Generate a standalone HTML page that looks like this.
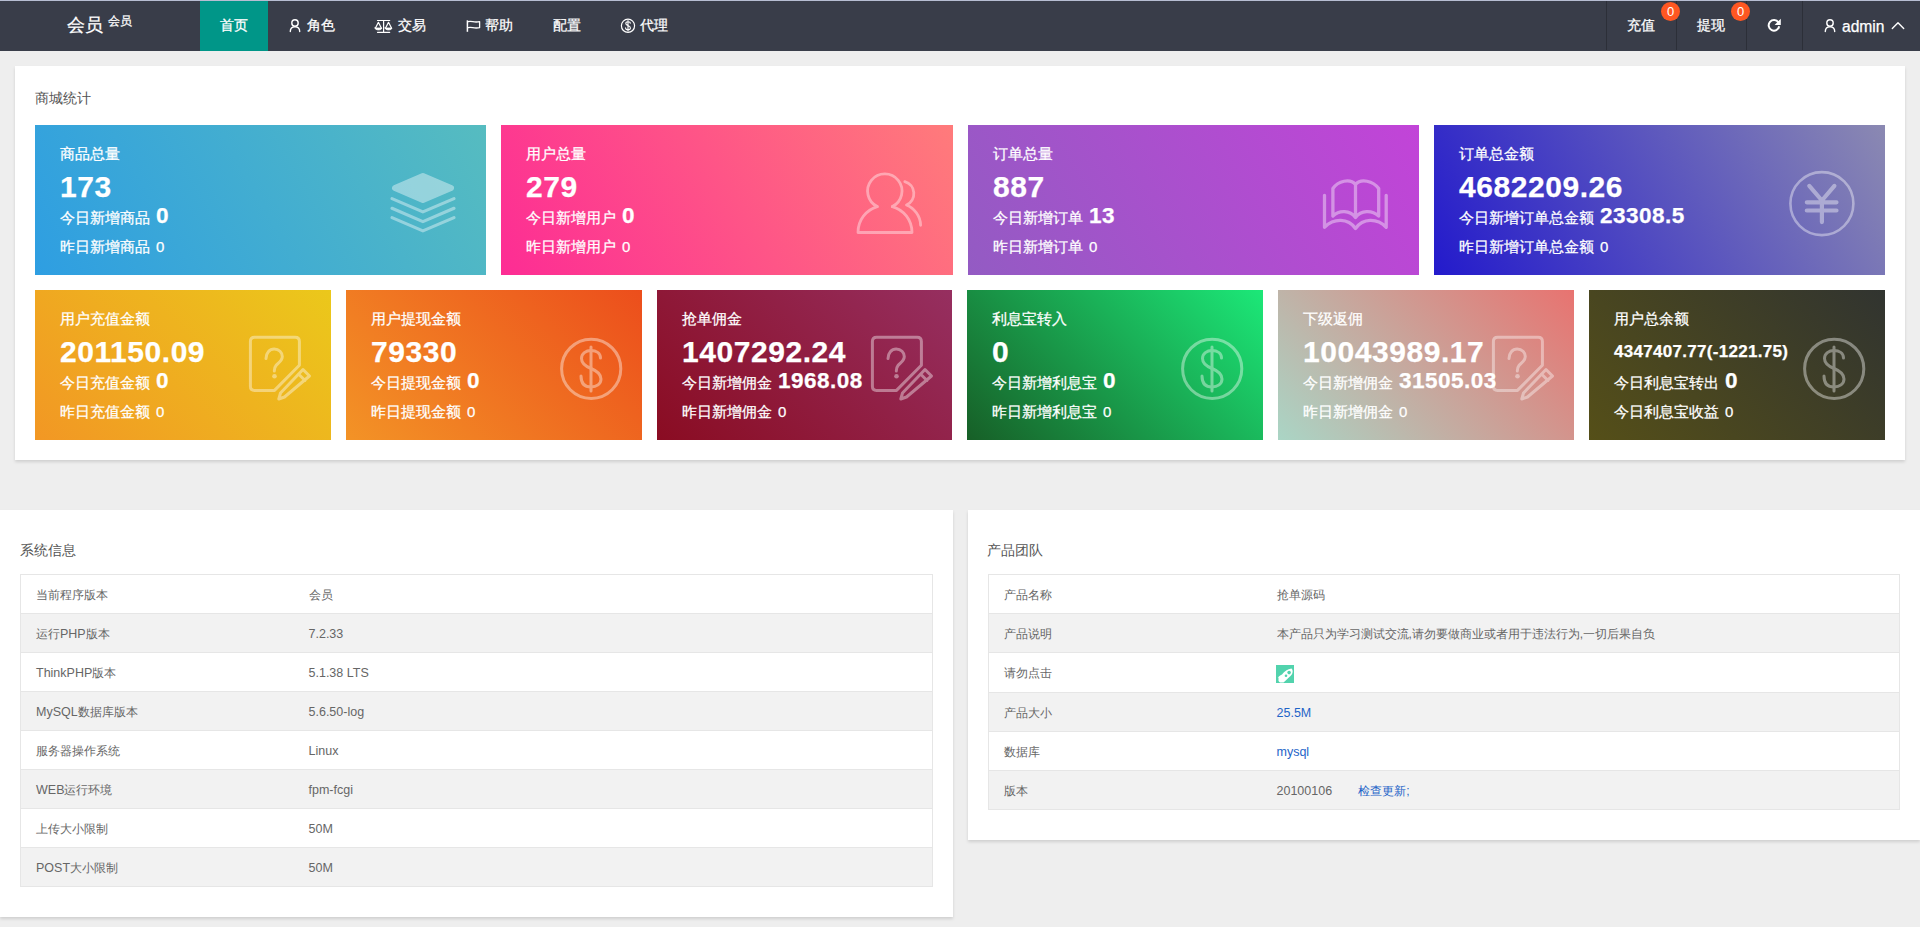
<!DOCTYPE html>
<html><head><meta charset="utf-8">
<style>
*{margin:0;padding:0;box-sizing:border-box}
html,body{width:1920px;height:927px;overflow:hidden;background:#eeeeee;font-family:"Liberation Sans",sans-serif;}
.abs{position:absolute}
.hdr{position:absolute;left:0;top:0;width:1920px;height:51px;background:#393d49;border-top:1px solid #b7bdd2;}
.nav{position:absolute;top:0;height:50px;line-height:50px;color:#fff;font-size:14px;white-space:nowrap;-webkit-text-stroke:.25px #fff}
.sep{position:absolute;top:1px;width:1px;height:49px;background:#2c2f38}
.badge{position:absolute;width:19px;height:19px;border-radius:50%;background:#ff5722;color:#fff;font-size:13px;line-height:19px;text-align:center}
.panel{position:absolute;background:#fff;box-shadow:0 2px 3px rgba(0,0,0,.13)}
.ptitle{position:absolute;font-size:14px;color:#555;line-height:20px;white-space:nowrap}
.card{position:absolute;color:#fff;overflow:hidden;-webkit-text-stroke:.25px #fff}
.card .t{position:absolute;left:25px;top:20px;font-size:15px;line-height:18px;white-space:nowrap}
.card .n{position:absolute;left:25px;top:46px;font-size:30px;line-height:32px;font-weight:bold;white-space:nowrap;letter-spacing:.55px}
.card .l3{position:absolute;left:25px;top:81px;font-size:15px;line-height:24px;white-space:nowrap}
.card .l3 b{font-size:22.5px;font-weight:bold;margin-left:6px;vertical-align:top;position:relative;top:-2.5px;letter-spacing:.5px}
.card .l4{position:absolute;left:25px;top:113px;font-size:15px;line-height:18px;white-space:nowrap}
.card .l4 span{margin-left:6px}
.card svg{position:absolute}
table{position:absolute;border-collapse:collapse;font-size:12px;color:#666}
td{height:39px;border-top:1px solid #e6e6e6;border-bottom:1px solid #e6e6e6;padding:2px 15px 0;white-space:nowrap}
.e{font-size:12.5px}
table{border-left:1px solid #e6e6e6;border-right:1px solid #e6e6e6}
tr:nth-child(even) td{background:#f2f2f2}
a{color:#1e64c8;text-decoration:none}
</style></head><body>

<!-- HEADER -->
<div class="hdr"></div>
<div class="nav" style="left:67px;font-size:18px;">会员</div>
<div class="nav" style="left:108px;top:-4px;font-size:12px;">会员</div>
<div class="abs" style="left:200px;top:1px;width:68px;height:50px;background:#009688"></div>
<div class="nav" style="left:220px;">首页</div>
<div class="nav" style="left:307px;">角色</div>
<div class="nav" style="left:398px;">交易</div>
<div class="nav" style="left:485px;">帮助</div>
<div class="nav" style="left:553px;">配置</div>
<div class="nav" style="left:640px;">代理</div>

<div class="sep" style="left:1606px"></div>
<div class="sep" style="left:1676px"></div>
<div class="sep" style="left:1746px"></div>
<div class="sep" style="left:1802px"></div>
<div class="nav" style="left:1627px;">充值</div>
<div class="nav" style="left:1697px;">提现</div>
<div class="badge" style="left:1661px;top:2px">0</div>
<div class="badge" style="left:1731px;top:2px">0</div>
<div class="nav" style="left:1842px;top:2px;font-size:15.6px">admin</div>

<svg class="abs" style="left:0;top:0" width="1920" height="51" viewBox="0 0 1920 51" fill="none" stroke="#fff" stroke-linecap="round" stroke-linejoin="round">
<!-- user -->
<circle cx="295" cy="23" r="3.2" stroke-width="1.4"/>
<path d="M290.3,31.6 C290.3,28.6 292.3,26.9 295,26.9 C297.7,26.9 299.7,28.6 299.7,31.6" stroke-width="1.4"/>
<!-- scale -->
<g stroke-width="1.2">
<path d="M377.5,20.5 L389.7,20.5 M383.6,20.5 L383.6,32.3 M377.5,32.3 L389.7,32.3"/>
<path d="M375.5,28 L378.4,22.3 L381.3,28 M385.6,28 L388.5,22.3 L391.5,28"/>
</g>
<path d="M375,28 L381.8,28 C381.8,29.3 380.3,29.9 378.4,29.9 C376.5,29.9 375,29.3 375,28 Z M385.1,28 L391.9,28 C391.9,29.3 390.4,29.9 388.5,29.9 C386.6,29.9 385.1,29.3 385.1,28 Z" fill="#fff" stroke-width=".8"/>
<!-- flag -->
<path d="M467.4,20.3 L467.4,31.8" stroke-width="1.5" stroke-linecap="butt"/>
<path d="M468.2,21.6 C472,20.6 474,23 479.6,21.6 L479.6,27.6 C474,29 472,26.6 468.2,27.6" stroke-width="1.3"/>
<!-- dollar circle -->
<circle cx="628" cy="25.8" r="6.6" stroke-width="1.2"/>
<path d="M630.3,23.3 C630.3,22.3 629.4,21.8 628,21.8 C626.6,21.8 625.8,22.5 625.8,23.5 C625.8,24.8 627,25.2 628,25.6 C629.2,26 630.4,26.5 630.4,27.9 C630.4,29 629.4,29.7 628,29.7 C626.6,29.7 625.6,29 625.6,27.9 M628,20.6 L628,31" stroke-width="1.1"/>
<!-- refresh -->
<path d="M1778.4,22.4 A5.3,5.3 0 1 0 1779.2,26.3" stroke-width="2" stroke-linecap="butt"/>
<path d="M1774.6,25 L1780.8,25 L1780.8,18.8 Z" fill="#fff" stroke="none"/>
<!-- admin user -->
<circle cx="1830" cy="23" r="3.2" stroke-width="1.4"/>
<path d="M1825.3,31.6 C1825.3,28.6 1827.3,26.9 1830,26.9 C1832.7,26.9 1834.7,28.6 1834.7,31.6" stroke-width="1.4"/>
<!-- caret up -->
<path d="M1892.3,28.6 L1898,22.8 L1903.7,28.6" stroke-width="1.4"/>
</svg>

<!-- STATS PANEL -->
<div class="panel" style="left:15px;top:66px;width:1890px;height:394px"></div>
<div class="ptitle" style="left:35px;top:88px">商城统计</div>

<div class="card" style="left:35px;top:125px;width:451px;height:150px;background:linear-gradient(60deg,#2e9ee2,#56bcc0)">
  <div class="t">商品总量</div><div class="n">173</div>
  <div class="l3">今日新增商品<b>0</b></div><div class="l4">昨日新增商品<span>0</span></div>
</div>
<div class="card" style="left:501px;top:125px;width:452px;height:150px;background:linear-gradient(60deg,#fd2c94,#ff7b7b)">
  <div class="t">用户总量</div><div class="n">279</div>
  <div class="l3">今日新增用户<b>0</b></div><div class="l4">昨日新增用户<span>0</span></div>
</div>
<div class="card" style="left:968px;top:125px;width:451px;height:150px;background:linear-gradient(60deg,#935bc3,#c244d8)">
  <div class="t">订单总量</div><div class="n">887</div>
  <div class="l3">今日新增订单<b>13</b></div><div class="l4">昨日新增订单<span>0</span></div>
</div>
<div class="card" style="left:1434px;top:125px;width:451px;height:150px;background:linear-gradient(60deg,#231acc,#8b89b2)">
  <div class="t">订单总金额</div><div class="n">4682209.26</div>
  <div class="l3">今日新增订单总金额<b>23308.5</b></div><div class="l4">昨日新增订单总金额<span>0</span></div>
</div>

<div class="card" style="left:35px;top:290px;width:296px;height:150px;background:linear-gradient(45deg,#f29724,#ebc81b)">
  <div class="t">用户充值金额</div><div class="n">201150.09</div>
  <div class="l3">今日充值金额<b>0</b></div><div class="l4">昨日充值金额<span>0</span></div>
</div>
<div class="card" style="left:346px;top:290px;width:296px;height:150px;background:linear-gradient(45deg,#f39326,#ec4e1c)">
  <div class="t">用户提现金额</div><div class="n">79330</div>
  <div class="l3">今日提现金额<b>0</b></div><div class="l4">昨日提现金额<span>0</span></div>
</div>
<div class="card" style="left:657px;top:290px;width:295px;height:150px;background:linear-gradient(45deg,#8a0c22,#962f60)">
  <div class="t">抢单佣金</div><div class="n">1407292.24</div>
  <div class="l3">今日新增佣金<b>1968.08</b></div><div class="l4">昨日新增佣金<span>0</span></div>
</div>
<div class="card" style="left:967px;top:290px;width:296px;height:150px;background:linear-gradient(45deg,#175f27,#1ce878)">
  <div class="t">利息宝转入</div><div class="n">0</div>
  <div class="l3">今日新增利息宝<b>0</b></div><div class="l4">昨日新增利息宝<span>0</span></div>
</div>
<div class="card" style="left:1278px;top:290px;width:296px;height:150px;background:linear-gradient(45deg,#aad5c5,#e87370)">
  <div class="t">下级返佣</div><div class="n">10043989.17</div>
  <div class="l3">今日新增佣金<b>31505.03</b></div><div class="l4">昨日新增佣金<span>0</span></div>
</div>
<div class="card" style="left:1589px;top:290px;width:296px;height:150px;background:linear-gradient(45deg,#554f18,#313430)">
  <div class="t">用户总余额</div><div class="n" style="font-size:17px;top:46px;letter-spacing:.3px">4347407.77(-1221.75)</div>
  <div class="l3">今日利息宝转出<b>0</b></div><div class="l4">今日利息宝收益<span>0</span></div>
</div>

<svg class="abs" style="left:0;top:0" width="1920" height="927" viewBox="0 0 1920 927" fill="none" stroke="#fff" stroke-linecap="round" stroke-linejoin="round"><g opacity=".4">
<!-- layers -->
<g stroke-width="3.2">
<polygon points="395,188 422.9,176 451,188 422.9,200" fill="#fff" stroke-width="6"/>
<polyline points="392,198.6 422.9,211.9 454,198.6"/>
<polyline points="392,208.3 422.9,221.6 454,208.3"/>
<polyline points="392,217.6 422.9,230.9 454,217.6"/>
</g>
<!-- users -->
<g stroke-width="2.8">
<path d="M877.3,206.6 A17.2,17.2 0 1 1 892.3,206.6"/>
<path d="M877.3,206.6 C866,210 858,220 858,232.5 L912,232.5 C912,220 904,210 892.3,206.6"/>
<path d="M904.8,181.6 A12.5,12.5 0 0 1 906.5,205 C914,208 920.6,216 920.6,225.3"/>
</g>
<!-- book -->
<g stroke-width="3.3">
<path d="M1324.5,195.3 L1324.5,227.3 C1334,218 1348,218 1355.5,228.5 C1363,218 1377,218 1386.2,227.3 L1386.2,195.3"/>
<path d="M1332.9,216 L1332.9,188.5 C1338,181 1350,178 1355.5,184.5 C1361,178 1373,181 1378.7,188.5 L1378.7,216 C1372,210 1361,210 1355.5,217.5 C1350,210 1339,210 1332.9,216 Z M1355.5,184.5 L1355.5,217.5"/>
</g>
<!-- yen -->
<circle cx="1821.9" cy="203.6" r="31.5" stroke-width="2.6"/>
<g stroke-width="4.2">
<path d="M1809.3,185.9 L1821.9,200.5 L1834.4,185.9 M1821.9,200.5 L1821.9,222.1 M1806.8,202.3 L1836.5,202.3 M1806.8,210.5 L1836.5,210.5"/>
</g>
<g stroke-width="3">
<g transform="translate(0.0,0)">
<path d="M250.4,341.5 Q250.4,337.3 254.6,337.3 L295.2,337.3 Q299.4,337.3 299.4,341.5 L299.4,365.2 L274.5,390.4 L254.6,390.4 Q250.4,390.4 250.4,386.2 Z" />
<path d="M266,358.5 C266,353 269.5,349 274.2,349 C279,349 282.3,352.5 282.3,356.5 C282.3,361 278,363 276,365.5 C274.6,367.2 274.3,368.5 274.3,371" />
<circle cx="274.5" cy="376.3" r="2.3" fill="#fff" stroke="none"/>
<path d="M303,369.5 L309.5,376 L284.5,397 L278.8,399 L280.5,393 Z M298.5,374 L305,380.5" />
</g><g transform="translate(622.0,0)">
<path d="M250.4,341.5 Q250.4,337.3 254.6,337.3 L295.2,337.3 Q299.4,337.3 299.4,341.5 L299.4,365.2 L274.5,390.4 L254.6,390.4 Q250.4,390.4 250.4,386.2 Z" />
<path d="M266,358.5 C266,353 269.5,349 274.2,349 C279,349 282.3,352.5 282.3,356.5 C282.3,361 278,363 276,365.5 C274.6,367.2 274.3,368.5 274.3,371" />
<circle cx="274.5" cy="376.3" r="2.3" fill="#fff" stroke="none"/>
<path d="M303,369.5 L309.5,376 L284.5,397 L278.8,399 L280.5,393 Z M298.5,374 L305,380.5" />
</g><g transform="translate(1243.0,0)">
<path d="M250.4,341.5 Q250.4,337.3 254.6,337.3 L295.2,337.3 Q299.4,337.3 299.4,341.5 L299.4,365.2 L274.5,390.4 L254.6,390.4 Q250.4,390.4 250.4,386.2 Z" />
<path d="M266,358.5 C266,353 269.5,349 274.2,349 C279,349 282.3,352.5 282.3,356.5 C282.3,361 278,363 276,365.5 C274.6,367.2 274.3,368.5 274.3,371" />
<circle cx="274.5" cy="376.3" r="2.3" fill="#fff" stroke="none"/>
<path d="M303,369.5 L309.5,376 L284.5,397 L278.8,399 L280.5,393 Z M298.5,374 L305,380.5" />
</g><g transform="translate(0.0,0)">
<circle cx="591.2" cy="368.8" r="29.6"/>
<path d="M600.5,358 C600.5,353 596,350.5 591,350.5 C586,350.5 581.5,353.5 581.5,358.5 C581.5,364 586,366.5 591,368.5 C596,370.5 601,373.5 601,379 C601,384 596.5,387 591,387 C585.5,387 581,384 581,376"/>
<path d="M591,347 L591,391"/>
</g><g transform="translate(621.0,0)">
<circle cx="591.2" cy="368.8" r="29.6"/>
<path d="M600.5,358 C600.5,353 596,350.5 591,350.5 C586,350.5 581.5,353.5 581.5,358.5 C581.5,364 586,366.5 591,368.5 C596,370.5 601,373.5 601,379 C601,384 596.5,387 591,387 C585.5,387 581,384 581,376"/>
<path d="M591,347 L591,391"/>
</g><g transform="translate(1243.0,0)">
<circle cx="591.2" cy="368.8" r="29.6"/>
<path d="M600.5,358 C600.5,353 596,350.5 591,350.5 C586,350.5 581.5,353.5 581.5,358.5 C581.5,364 586,366.5 591,368.5 C596,370.5 601,373.5 601,379 C601,384 596.5,387 591,387 C585.5,387 581,384 581,376"/>
<path d="M591,347 L591,391"/>
</g>
</g>
</g></svg>

<!-- SYSTEM INFO -->
<div class="panel" style="left:0;top:510px;width:953px;height:407px"></div>
<div class="ptitle" style="left:20px;top:540px">系统信息</div>
<table style="left:20px;top:574px;width:913px">
<colgroup><col style="width:273px"><col></colgroup>
<tr><td>当前程序版本</td><td>会员</td></tr>
<tr><td>运行<span class="e">PHP</span>版本</td><td><span class="e">7.2.33</span></td></tr>
<tr><td><span class="e">ThinkPHP</span>版本</td><td><span class="e">5.1.38 LTS</span></td></tr>
<tr><td><span class="e">MySQL</span>数据库版本</td><td><span class="e">5.6.50-log</span></td></tr>
<tr><td>服务器操作系统</td><td><span class="e">Linux</span></td></tr>
<tr><td><span class="e">WEB</span>运行环境</td><td><span class="e">fpm-fcgi</span></td></tr>
<tr><td>上传大小限制</td><td><span class="e">50M</span></td></tr>
<tr><td><span class="e">POST</span>大小限制</td><td><span class="e">50M</span></td></tr>
</table>

<!-- PRODUCT TEAM -->
<div class="panel" style="left:968px;top:510px;width:952px;height:330px"></div>
<div class="ptitle" style="left:987px;top:540px">产品团队</div>
<table style="left:988px;top:574px;width:912px">
<colgroup><col style="width:273px"><col></colgroup>
<tr><td>产品名称</td><td>抢单源码</td></tr>
<tr><td>产品说明</td><td>本产品只为学习测试交流,请勿要做商业或者用于违法行为,一切后果自负</td></tr>
<tr style="height:40px"><td style="height:40px">请勿点击</td><td style="height:40px"><svg width="18" height="18" viewBox="0 0 18 18" style="display:block;margin-left:-1px;position:relative;top:0px"><rect width="18" height="18" fill="#52d3ad"/><path d="M1,14.5 C2,11.5 4,10.5 6,9.5 C8.5,6.5 11.5,4 15.5,3.5 C17.5,5.5 17,9 14,11.5 C11.5,13.5 10,15.5 7.5,17.5 L4,17.5 C3,16.5 1.5,15.5 1,14.5 Z" fill="#fff"/><rect x="0" y="12.5" width="2.5" height="5.5" fill="#52d3ad"/><circle cx="13.1" cy="7.6" r="1.8" fill="#52d3ad"/><circle cx="10" cy="10.7" r="1.3" fill="#52d3ad"/></svg></td></tr>
<tr><td>产品大小</td><td><a class="e">25.5M</a></td></tr>
<tr><td>数据库</td><td><a class="e">mysql</a></td></tr>
<tr><td>版本</td><td><span class="e">20100106</span><a style="margin-left:26px">检查更新;</a></td></tr>
</table>

</body></html>
